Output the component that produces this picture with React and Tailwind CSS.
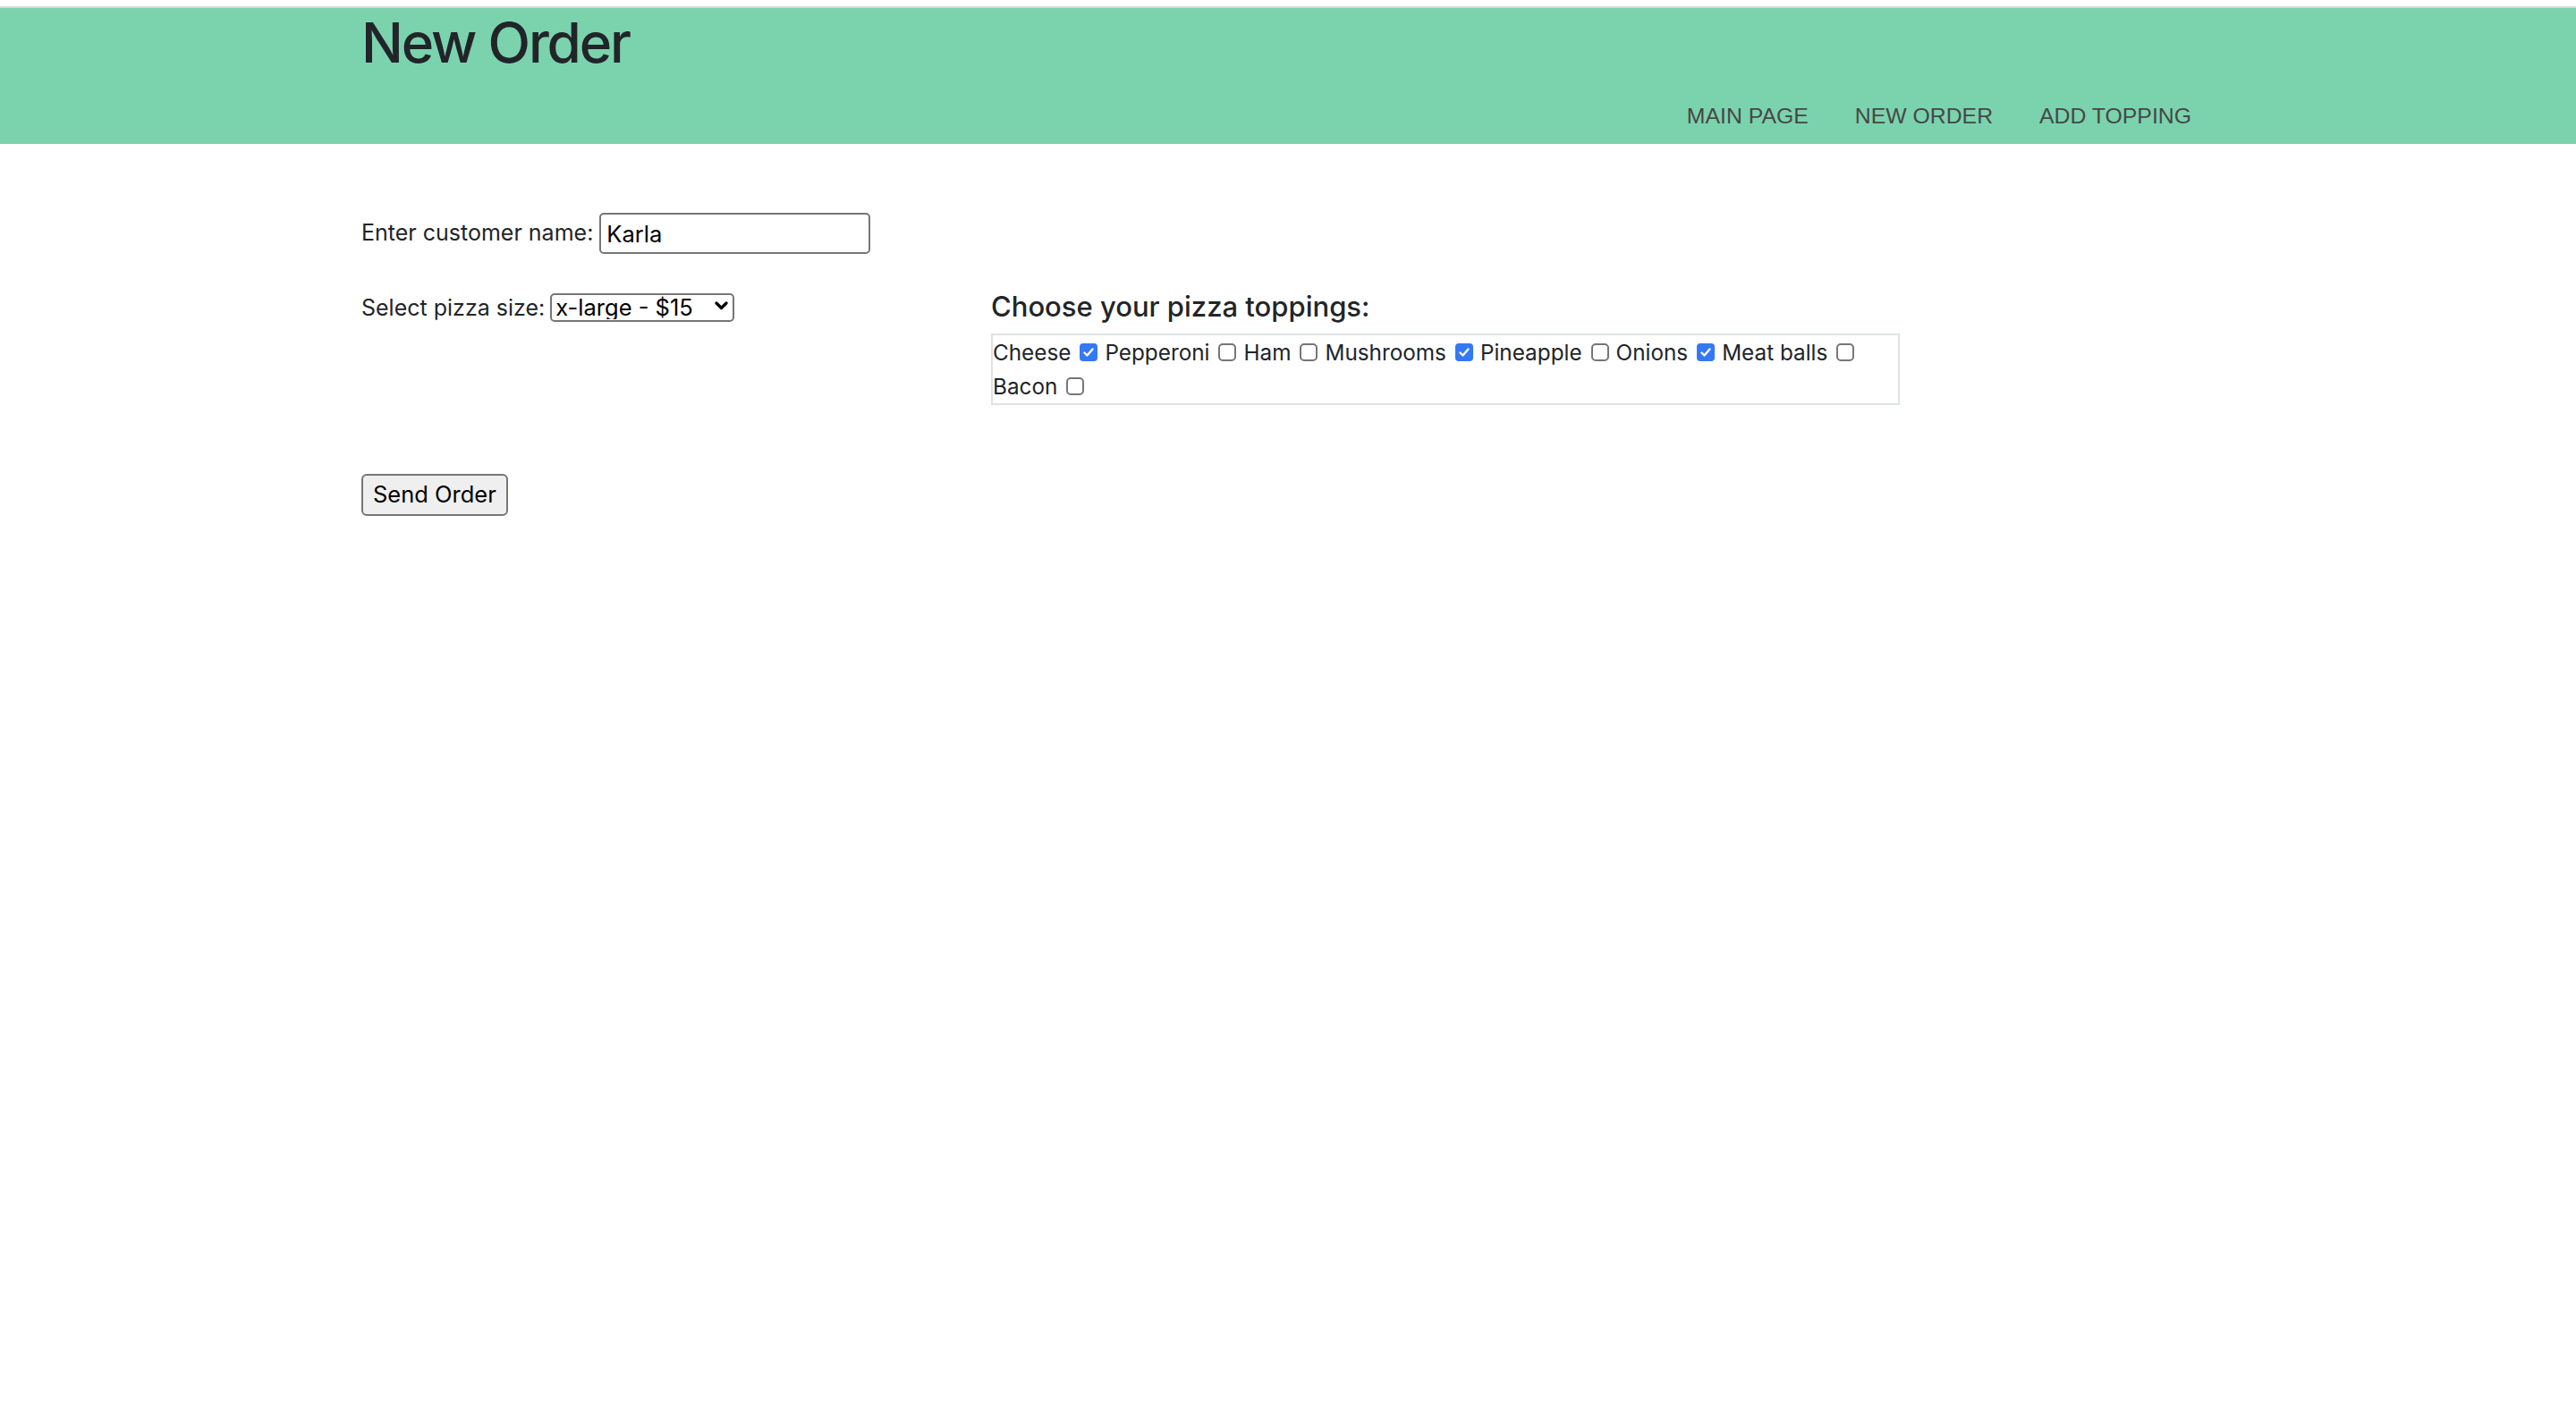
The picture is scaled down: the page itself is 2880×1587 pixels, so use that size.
import { useState } from 'react';

const TOPPINGS = [
  { name: 'Cheese', checked: true },
  { name: 'Pepperoni', checked: false },
  { name: 'Ham', checked: false },
  { name: 'Mushrooms', checked: true },
  { name: 'Pineapple', checked: false },
  { name: 'Onions', checked: true },
  { name: 'Meat balls', checked: false },
  { name: 'Bacon', checked: false },
];

function Checkbox({ checked, onChange }) {
  return (
    <button
      type="button"
      onClick={onChange}
      className={`ml-[10px] mr-[8px] w-[20px] h-[20px] shrink-0 flex items-center justify-center ${
        checked ? 'bg-[#3478f6] rounded-[4px]' : 'bg-white border-2 border-[#767676] rounded-[5px]'
      }`}
    >
      {checked && (
        <svg width="14" height="14" viewBox="0 0 14 14" fill="none">
          <path d="M2.5 7.5l3 3L11.5 3.5" stroke="white" strokeWidth="2.4" strokeLinecap="round" strokeLinejoin="round" />
        </svg>
      )}
    </button>
  );
}

function App() {
  const [name, setName] = useState('Karla');
  const [size, setSize] = useState('xl');
  const [toppings, setToppings] = useState(TOPPINGS);

  const toggle = (idx) => {
    setToppings(toppings.map((t, i) => (i === idx ? { ...t, checked: !t.checked } : t)));
  };

  return (
    <div className="min-h-screen bg-white text-[#212529] font-['Inter',sans-serif]">
      <header className="mt-[7px] border-t-2 border-[#d8d8dc] bg-[#7bd3ae] h-[154px]">
        <div className="w-[2072px] mx-auto flex flex-col">
          <h1 className="pt-[8px] text-[62px] leading-none font-medium tracking-[-0.035em] text-[#212529]">New Order</h1>
          <nav className="mt-[39px] flex justify-end font-['Liberation_Sans',sans-serif] text-[24.8px] leading-none text-[#474747]">
            <a href="#" className="px-[26px]">MAIN PAGE</a>
            <a href="#" className="px-[26px]">NEW ORDER</a>
            <a href="#" className="px-[26px]">ADD TOPPING</a>
          </nav>
        </div>
      </header>

      <main className="w-[2072px] mx-auto pt-[77px] text-[25px]">
        <div className="flex items-center">
          <label className="mr-[7px]">Enter customer name:</label>
          <input
            value={name}
            onChange={(e) => setName(e.target.value)}
            className="w-[303px] h-[46px] border-2 border-[#767676] rounded-[5px] px-[6px] text-[25.5px] text-black outline-none"
          />
        </div>

        <div className="flex mt-[42px]">
          <div className="w-[704px] flex items-center self-start">
            <label className="mr-[6px]">Select pizza size:</label>
            <div className="relative">
              <select
                value={size}
                onChange={(e) => setSize(e.target.value)}
                className="appearance-none w-[206px] h-[32px] border-2 border-[#767676] rounded-[5px] pl-[4px] text-[25.5px] text-black leading-none bg-white outline-none"
              >
                <option value="s">small - $8</option>
                <option value="m">medium - $10</option>
                <option value="l">large - $12</option>
                <option value="xl">x-large - $15</option>
              </select>
              <svg className="absolute right-[7px] top-[11px] pointer-events-none" width="15" height="10" viewBox="0 0 15 10" fill="none">
                <path d="M2 2l5.5 5.5L13 2" stroke="black" strokeWidth="3.2" strokeLinecap="round" strokeLinejoin="round" />
              </svg>
            </div>
          </div>

          <div className="w-[1016px] pt-[1px]">
            <h5 className="text-[31px] leading-none font-medium mb-[15px]">Choose your pizza toppings:</h5>
            <div className="border-2 border-[#dee2e6] flex flex-wrap items-center leading-[38px] text-[24.3px]">
              {toppings.map((t, i) => (
                <div key={t.name} className="flex items-center">
                  <span>{t.name}</span>
                  <Checkbox checked={t.checked} onChange={() => toggle(i)} />
                </div>
              ))}
            </div>
          </div>
        </div>

        <button className="mt-[77px] h-[47px] px-[11px] border-2 border-[#767676] bg-[#efefef] rounded-[6px] text-[25.5px] text-black">
          Send Order
        </button>
      </main>
    </div>
  );
}

export default App;
